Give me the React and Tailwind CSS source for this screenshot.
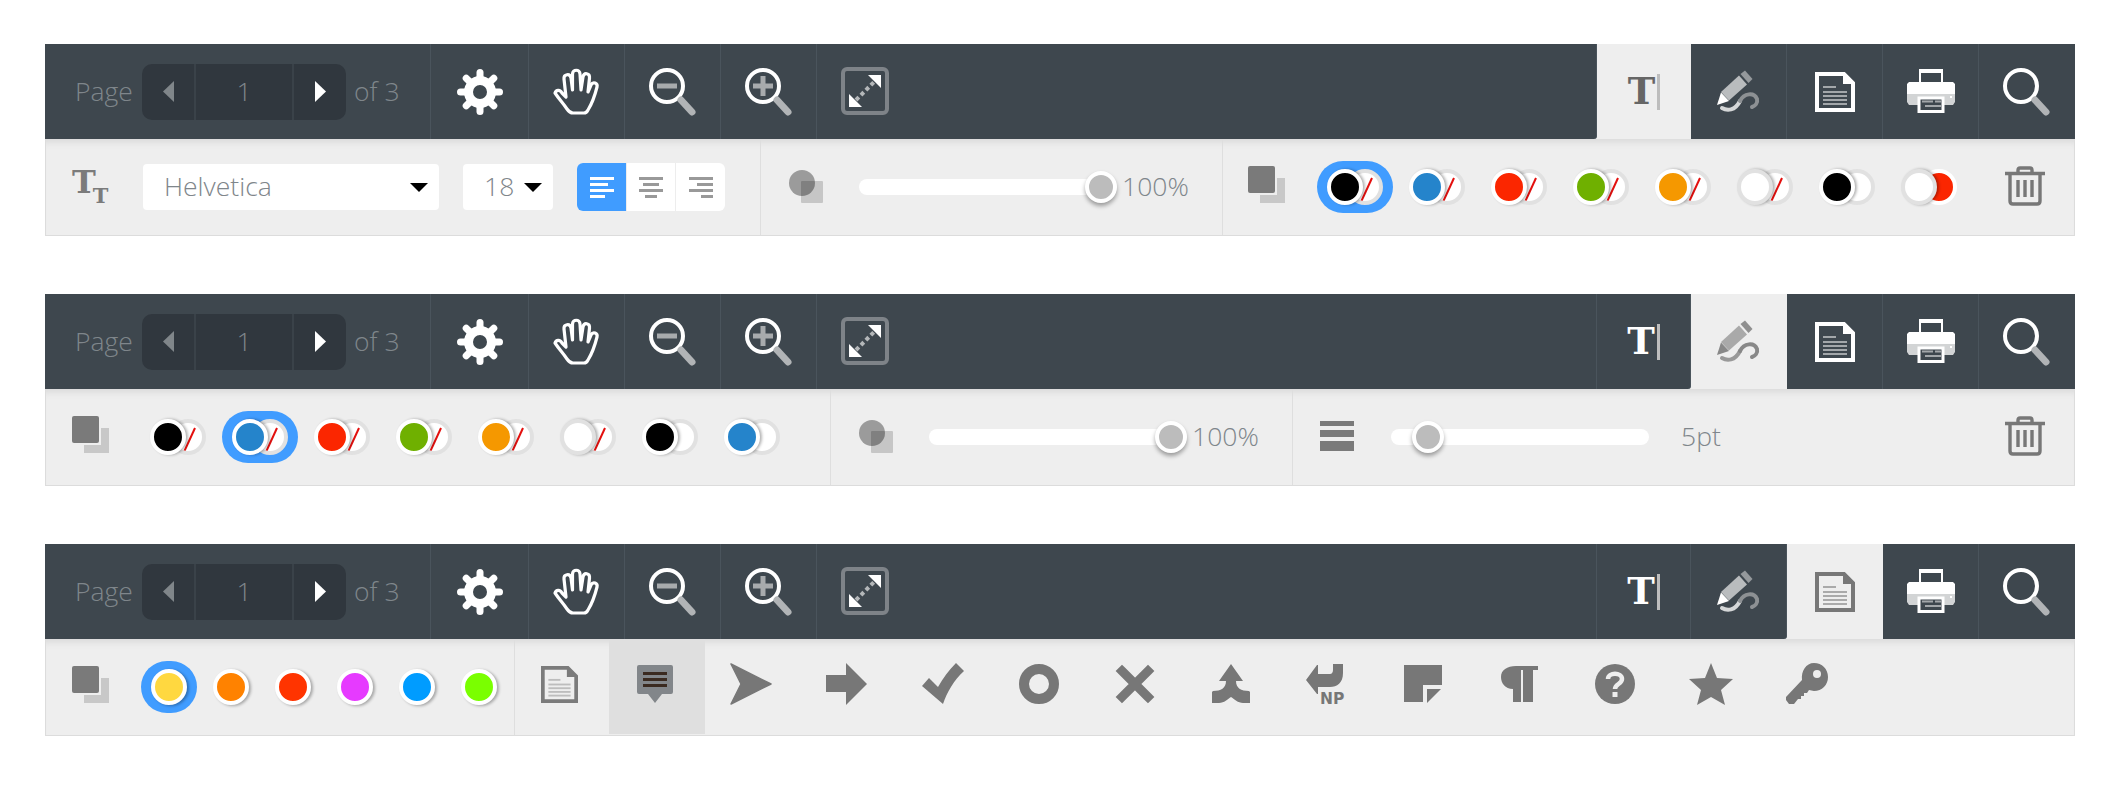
import React from "react";

const F = { fontFamily: '"Open Sans", sans-serif' };

function Gear() {
  const angles = [0, 45, 90, 135, 180, 225, 270, 315];
  return (
    <svg width="46" height="46" viewBox="0 0 46 46">
      <circle cx="23" cy="23" r="11.5" fill="none" stroke="#fff" strokeWidth="9" />
      {angles.map((a) => (
        <line key={a} x1="23" y1="10" x2="23" y2="3.5" stroke="#fff" strokeWidth="7" strokeLinecap="round" transform={`rotate(${a} 23 23)`} />
      ))}
    </svg>
  );
}

function HandIcon() {
  return (
    <svg width="48" height="48" viewBox="0 0 48 48" fill="none" stroke="#fff" strokeWidth="3.2" strokeLinejoin="round" strokeLinecap="round">
      <path d="M2 25 C3 22 7 21 9 25 L13 29 L11 11 C10.5 6 17 5 18 10 L19.5 22 L19.5 6 C19.5 1 27 1 27 6 L28 22 L30 9 C31 4 37 5 36.5 10 L35 24 L38 17 C40 13 45 15 44 19 C42 27 40 34 35 42 C34 44 33 45 31 45 H20 C17 45 16 44 14 41 C10 35 6 31 2 25 Z" />
    </svg>
  );
}

function Loupe({ sign }) {
  return (
    <svg width="50" height="50" viewBox="0 0 50 50">
      <circle cx="19" cy="19" r="16" fill="none" stroke="#fff" strokeWidth="4" />
      <line x1="33" y1="33" x2="44" y2="45" stroke="#b1b4b6" strokeWidth="7" strokeLinecap="round" />
      {sign && <rect x="9" y="16.5" width="20" height="5" fill="#a8abad" />}
      {sign === "plus" && <rect x="16.5" y="9" width="5" height="20" fill="#a8abad" />}
    </svg>
  );
}

function Expand() {
  return (
    <svg width="48" height="48" viewBox="0 0 48 48">
      <rect x="2" y="2" width="44" height="44" rx="4" fill="none" stroke="#7e8388" strokeWidth="4" />
      <polygon points="40,8 40,21 27,8" fill="#fff" />
      <polygon points="8,40 8,27 21,40" fill="#fff" />
      <line x1="15" y1="33" x2="33" y2="15" stroke="#b4b7b9" strokeWidth="4" strokeDasharray="4 3" />
    </svg>
  );
}

function TCursor({ active }) {
  return (
    <div className="flex items-center">
      <span className="text-[37px] leading-none font-bold" style={{ fontFamily: '"DejaVu Serif", serif', color: active ? "#666" : "#fff" }}>T</span>
      <span className="ml-[2px] w-[3px] h-[36px] bg-[#bdbdbd]" />
    </div>
  );
}

function Pencil({ active }) {
  return (
    <svg width="44" height="44" viewBox="0 0 44 44">
      <polygon points="4,22 22,5.5 30,14.5 12,30.5" fill={active ? "#a9a9a9" : "#b9bcbe"} />
      <polygon points="23.5,4 28,0.5 35.5,9 31.5,13" fill={active ? "#8f8f8f" : "#95999c"} />
      <polygon points="4,22.5 12,31 0,35" fill={active ? "#888" : "#fff"} />
      <path d="M5 38 C10 41 18 41 23 31" fill="none" stroke={active ? "#999" : "#d5d7d8"} strokeWidth="4" strokeLinecap="round" />
      <path d="M23 31 C27 23 37 22 40 29 C41 33 38 36 35 37" fill="none" stroke={active ? "#888" : "#8d9194"} strokeWidth="4" strokeLinecap="round" />
    </svg>
  );
}

function DocIcon({ color = "#fff", lines = "#a3a7aa", w = 40, h = 40 }) {
  return (
    <svg width={w} height={h} viewBox="0 0 40 40" preserveAspectRatio="none">
      <path d="M2 2 H29 L38 11 V38 H2 Z" fill="none" stroke={color} strokeWidth="4" />
      <path d="M28 1 L39 12 H28 Z" fill={color} />
      <rect x="8" y="14" width="13" height="2" fill={lines} />
      <rect x="8" y="19" width="24" height="2" fill={lines} />
      <rect x="8" y="23" width="24" height="2" fill={lines} />
      <rect x="8" y="27" width="24" height="2" fill={lines} />
      <rect x="8" y="31" width="24" height="2" fill={lines} />
    </svg>
  );
}

function Printer() {
  return (
    <svg width="48" height="44" viewBox="0 0 48 44">
      <path d="M12 0 H36 V20 H12 Z M14 4 V13 H34 V4 Z" fill="#fff" fillRule="evenodd" />
      <path d="M2 13 H46 L48 15 V25 H0 V15 Z" fill="#fff" />
      <path d="M0 25 H48 V33 L46 36 H2 L0 33 Z" fill="#d2d4d5" />
      <rect x="12" y="29" width="24" height="13.5" fill="#3e474e" stroke="#fff" strokeWidth="3" />
      <rect x="15" y="31.5" width="11" height="2" fill="#a3a7aa" />
      <rect x="28" y="31.5" width="6" height="2" fill="#a3a7aa" />
      <rect x="18" y="36" width="16" height="2" fill="#a3a7aa" />
      <rect x="43" y="27" width="2" height="2" fill="#fff" />
    </svg>
  );
}

function IconBtn({ children, active, square, noBorder, w = "w-[96px]" }) {
  return (
    <div className={`${w} shrink-0 flex items-center justify-center ${active ? "bg-[#eeeeee]" : "bg-[#3e474e]"} ${!active && !noBorder ? "border-r border-[#4a545c]" : ""} ${square ? "rounded-br-[3px]" : ""}`}>
      {children}
    </div>
  );
}

function Tri({ dir, color }) {
  const pts = dir === "left" ? "11,0 11,21 0,10.5" : "0,0 0,21 11,10.5";
  return <svg width="11" height="21" viewBox="0 0 11 21"><polygon points={pts} fill={color} /></svg>;
}

function Caret() {
  return <svg width="18" height="9" viewBox="0 0 18 9"><polygon points="0,0 18,0 9,9" fill="#000" /></svg>;
}

function TopBar({ tab }) {
  return (
    <div className="flex h-[95px] bg-[#eeeeee]" style={F}>
      <div className={`flex-1 flex bg-[#3e474e] border-r border-[#4a545c] ${tab === 0 ? "rounded-br-[3px]" : ""}`}>
        <div className="w-[386px] shrink-0 flex items-center pl-[30px] border-r border-[#4a545c] text-[26.5px] font-light text-[#7f868b]">
          <span className="w-[67px]">Page</span>
          <div className="flex h-[56px] w-[204px] rounded-[10px] bg-[#30373e] overflow-hidden">
            <div className="w-[52px] flex items-center justify-center"><Tri dir="left" color="#80868a" /></div>
            <div className="w-[100px] flex items-center justify-center border-x-2 border-[#3a4249]">1</div>
            <div className="w-[52px] flex items-center justify-center"><Tri dir="right" color="#fff" /></div>
          </div>
          <span className="ml-[8px]">of 3</span>
        </div>
        <IconBtn w="w-[98px]"><Gear /></IconBtn>
        <IconBtn><HandIcon /></IconBtn>
        <IconBtn><Loupe sign="minus" /></IconBtn>
        <IconBtn><Loupe sign="plus" /></IconBtn>
        <IconBtn noBorder><span className="mb-[2px]"><Expand /></span></IconBtn>
      </div>
      <IconBtn w="w-[94px]" active={tab === 0} square={tab === 1}><TCursor active={tab === 0} /></IconBtn>
      <IconBtn active={tab === 1} square={tab === 2}><Pencil active={tab === 1} /></IconBtn>
      <IconBtn active={tab === 2}>{tab === 2 ? <DocIcon color="#777" lines="#aaa" /> : <DocIcon />}</IconBtn>
      <IconBtn><span className="mb-[2px]"><Printer /></span></IconBtn>
      <IconBtn noBorder><Loupe /></IconBtn>
    </div>
  );
}

function SubBar({ children }) {
  return (
    <div className="flex h-[97px] bg-[#eeeeee] border-x border-b border-[#dcdcdc] shadow-[inset_0_9px_8px_-7px_rgba(0,0,0,0.11)]" style={F}>
      {children}
    </div>
  );
}

function Section({ w, children, className = "" }) {
  return <div className={`shrink-0 flex items-center border-r border-[#dedede] ${className}`} style={{ width: w }}>{children}</div>;
}

function TextSizeIcon() {
  return (
    <div className="flex items-start w-[40px] h-[40px] text-[#7b7b7b] font-bold leading-none" style={{ fontFamily: '"DejaVu Serif", serif' }}>
      <span className="text-[32px] -mt-[1px]">T</span>
      <span className="text-[21px] mt-[18px] -ml-[3px]">T</span>
    </div>
  );
}

function AlignIcon({ mode, color }) {
  const wide = mode === "left" ? [24, 18, 24, 15] : [24, 16, 24, 12];
  return (
    <svg width="24" height="21" viewBox="0 0 24 21">
      {wide.map((w, i) => {
        const x = mode === "center" ? (24 - w) / 2 : mode === "right" ? 24 - w : 0;
        return <rect key={i} x={x} y={i * 6} width={w} height="3" fill={color} />;
      })}
    </svg>
  );
}

function OpacityIcon() {
  return (
    <svg width="36" height="34" viewBox="0 0 36 34">
      <circle cx="13" cy="13" r="13" fill="#9b9b9b" />
      <rect x="12" y="11" width="22" height="22" rx="1" fill="#000" fillOpacity="0.17" />
    </svg>
  );
}

function BorderIcon() {
  return (
    <svg width="37" height="37" viewBox="0 0 37 37">
      <path d="M29 12 H37 V37 H12 V29 H29 Z" fill="#c8c8c8" />
      <rect x="0" y="0" width="27" height="27" rx="2" fill="#7a7a7a" />
    </svg>
  );
}

function Trash() {
  return (
    <svg width="40" height="40" viewBox="0 0 40 40" fill="none" stroke="#777" strokeWidth="3.4">
      <path d="M0 7.5 H40" />
      <path d="M13 7 V4 Q13 2 15 2 H25 Q27 2 27 4 V7" />
      <path d="M5 8 V35 Q5 38 8 38 H32 Q35 38 35 35 V8" />
      <path d="M13 14 V31 M20 14 V31 M27 14 V31" />
    </svg>
  );
}

function Slider({ left }) {
  return (
    <div className="relative w-[258px] h-[16px] bg-white rounded-full">
      <div className="absolute top-[-8px] w-[32px] h-[32px] rounded-full bg-[#bcbcbc] border-[4px] border-white shadow-[0_3px_4px_rgba(0,0,0,0.35)]" style={{ left }} />
    </div>
  );
}

function Swatch({ front, back, selected, mode = "pair" }) {
  const ring = front === "#fff" ? "border-[#e1e1e1]" : "border-white";
  return (
    <div className={`w-[76px] h-[52px] shrink-0 rounded-[26px] flex items-center justify-center ${selected ? "bg-[#409cff]" : ""}`}>
      <div className={`relative z-10 w-[36px] h-[36px] rounded-full border-[4px] ${ring} shadow-[2px_0_3px_rgba(0,0,0,0.3)]`} style={{ backgroundColor: front }} />
      <div className={`-ml-[16px] w-[36px] h-[36px] rounded-full border-[4px] ${back ? "border-white" : "border-[#e1e1e1]"} overflow-hidden`} style={{ backgroundColor: back || "#fff" }}>
        {mode === "slash" && (
          <svg width="28" height="28" viewBox="0 0 28 28"><line x1="21" y1="5" x2="10" y2="29" stroke="#e3100e" strokeWidth="2" /></svg>
        )}
      </div>
    </div>
  );
}

function Dot({ color, selected }) {
  return (
    <div className={`w-[56px] h-[52px] shrink-0 rounded-[26px] flex items-center justify-center ${selected ? "bg-[#409cff]" : ""}`}>
      <div className="w-[36px] h-[36px] rounded-full border-[4px] border-white shadow-[2px_1px_3px_rgba(0,0,0,0.3)]" style={{ backgroundColor: color }} />
    </div>
  );
}

const G = "#777";
const Arrow = () => <svg width="42" height="42" viewBox="0 0 42 42"><path d="M1 1 L41 21 L1 41 L11 21 Z" fill={G} stroke={G} strokeWidth="1.5" strokeLinejoin="round" /></svg>;
const RightArrow = () => <svg width="42" height="42" viewBox="0 0 42 42"><path d="M0 12 H20 V0 L41 21 L20 42 V29 H0 Z" fill={G} /></svg>;
const Check = () => <svg width="42" height="42" viewBox="0 0 42 42"><path d="M0 23 L7 15 L16 24 C21 15 27 7 34 0 L42 8 C32 17 25 29 21 41 Z" fill={G} /></svg>;
const Ring = () => <svg width="40" height="40" viewBox="0 0 40 40"><circle cx="20" cy="20" r="15" fill="none" stroke={G} strokeWidth="10" /></svg>;
const Cross = () => <svg width="40" height="40" viewBox="0 0 40 40"><path d="M7 7 L33 33 M33 7 L7 33" stroke={G} strokeWidth="9" strokeLinecap="square" /></svg>;
const Merge = () => <svg width="38" height="40" viewBox="0 0 38 40"><path d="M19 0 L31 17 H24 C24 24 29 27 37 27 L38 28 V39 H31 C26 39 22 35 19 33 C16 35 12 39 7 39 H0 V28 L1 27 C9 27 14 24 14 17 H7 Z" fill={G} /></svg>;
const NewPara = () => (
  <svg width="44" height="46" viewBox="0 0 44 46" className="block -mb-[4px]">
    <path d="M1 17 L12 2 H13 V11 H25 C27 11 28 9 28 7 V1 H38 V10 C38 20 32 24 25 24 H13 V31 H12 Z" fill={G} />
    <text x="15" y="41" fontFamily='"DejaVu Sans", sans-serif' fontWeight="700" fontSize="15.5" fill={G}>NP</text>
  </svg>
);
const Note = () => <svg width="38" height="38" viewBox="0 0 38 38"><path d="M0 0 H38 V20 H19 V37 H0 Z" fill={G} /><path d="M23 24 H37 L23 38 Z" fill={G} /></svg>;
const Para = () => <svg width="37" height="38" viewBox="0 0 37 38"><path d="M15 1 H37 V5 H32 V37 H22 V5 H20 V37 H12 V24 C4 24 0 18 0 12 C0 5 6 1 15 1 Z" fill={G} /></svg>;
const Help = () => (
  <svg width="40" height="40" viewBox="0 0 40 40">
    <circle cx="20" cy="20" r="20" fill={G} />
    <path d="M13 15 C13 8 27 8 27 15 C27 20 20 20 20 25" fill="none" stroke="#eeeeee" strokeWidth="4.5" />
    <rect x="17.5" y="28" width="5" height="5" fill="#eeeeee" />
  </svg>
);
const Star = () => <svg width="44" height="42" viewBox="0 0 44 42"><polygon points="22,0 28,15 44,16 32,27 36,42 22,34 8,42 12,27 0,16 16,15" fill={G} /></svg>;
const Key = () => (
  <svg width="42" height="42" viewBox="0 0 42 42">
    <path d="M28 0 C36 0 42 6 42 14 C42 22 36 28 28 28 L23 27 L21 30 H18 V33 H15 V36 H12 L8 41 H3 L0 37 V34 L16 17 C15 8 20 0 28 0 Z" fill={G} />
    <circle cx="31" cy="11" r="4" fill="#eeeeee" />
  </svg>
);

const SLASH = ["#000", "#2584cb", "#fb2600", "#6fb000", "#f59800", "#fff"];

function Cell({ children, active, w = "w-[96px]" }) {
  return <div className={`${w} shrink-0 flex items-center justify-center mb-[1px] ${active ? "bg-[#dfdfdf]" : ""}`}>{children}</div>;
}

export default function App() {
  return (
    <div className="min-h-[800px] bg-white pt-[44px] pl-[45px] w-[2075px] flex flex-col gap-[58px]">
      <div>
        <TopBar tab={0} />
        <SubBar>
          <Section w={715} className="pl-[26px]">
            <TextSizeIcon />
            <div className="ml-[31px] w-[296px] h-[46px] rounded-[4px] bg-white flex items-center justify-between pl-[21px] pr-[11px] text-[26.5px] font-light text-[#7f868b]">
              <span>Helvetica</span><Caret />
            </div>
            <div className="ml-[24px] w-[90px] h-[46px] rounded-[4px] bg-white flex items-center justify-between pl-[21px] pr-[11px] text-[26.5px] font-light text-[#7f868b]">
              <span>18</span><Caret />
            </div>
            <div className="ml-[24px] w-[148px] h-[48px] rounded-[6px] bg-white flex overflow-hidden">
              <div className="w-[49px] bg-[#409cff] flex items-center justify-center"><AlignIcon mode="left" color="#fff" /></div>
              <div className="w-[50px] border-x border-[#ededed] flex items-center justify-center"><AlignIcon mode="center" color="#999" /></div>
              <div className="w-[49px] flex items-center justify-center"><AlignIcon mode="right" color="#999" /></div>
            </div>
          </Section>
          <Section w={462} className="pl-[28px]">
            <OpacityIcon />
            <div className="ml-[34px]"><Slider left={226} /></div>
            <span className="ml-[5px] text-[26.5px] font-light text-[#7f868b]">100%</span>
          </Section>
          <div className="flex-1 flex items-center pl-[25px]">
            <span className="mb-[5px]"><BorderIcon /></span>
            <div className="ml-[32px] flex gap-[6px]">
              {SLASH.map((c, i) => <Swatch key={c} front={c} mode="slash" selected={i === 0} />)}
              <Swatch front="#000" />
              <Swatch front="#fff" back="#fb2600" />
            </div>
            <span className="ml-[38px] mb-[3px]"><Trash /></span>
          </div>
        </SubBar>
      </div>

      <div>
        <TopBar tab={1} />
        <SubBar>
          <Section w={785} className="pl-[26px]">
            <span className="mb-[5px]"><BorderIcon /></span>
            <div className="ml-[31px] flex gap-[6px]">
              {SLASH.map((c, i) => <Swatch key={c} front={c} mode="slash" selected={i === 1} />)}
              <Swatch front="#000" />
              <Swatch front="#2584cb" />
            </div>
          </Section>
          <Section w={462} className="pl-[28px]">
            <OpacityIcon />
            <div className="ml-[34px]"><Slider left={226} /></div>
            <span className="ml-[5px] text-[26.5px] font-light text-[#7f868b]">100%</span>
          </Section>
          <div className="flex-1 flex items-center pl-[27px]">
            <div className="w-[34px] h-[30px] flex flex-col justify-between mb-[3px]">
              <div className="h-[5px] bg-[#7a7a7a]" />
              <div className="h-[7px] bg-[#7a7a7a]" />
              <div className="h-[10px] bg-[#7a7a7a]" />
            </div>
            <div className="ml-[37px]"><Slider left={21} /></div>
            <span className="ml-[32px] w-[324px] text-[26.5px] font-light text-[#7f868b]">5pt</span>
            <span className="mb-[3px]"><Trash /></span>
          </div>
        </SubBar>
      </div>

      <div>
        <TopBar tab={2} />
        <SubBar>
          <Section w={469} className="pl-[26px]">
            <span className="mb-[5px]"><BorderIcon /></span>
            <div className="ml-[32px] flex gap-[6px]">
              <Dot color="#ffd840" selected />
              <Dot color="#ff8200" />
              <Dot color="#ff3400" />
              <Dot color="#e63aff" />
              <Dot color="#009cff" />
              <Dot color="#7aff00" />
            </div>
          </Section>
          <div className="flex flex-1">
            <Cell w="w-[94px]"><span className="mb-[5px] mr-[6px]"><DocIcon color="#7b7b7b" lines="#bdbdbd" w={37} h={37} /></span></Cell>
            <Cell active>
              <svg width="36" height="38" viewBox="0 0 36 38" className="mb-[6px] mr-[4px]">
                <path d="M2 0 H34 Q36 0 36 2 V27 Q36 29 34 29 H25 L18 38 L11 29 H2 Q0 29 0 27 V2 Q0 0 2 0 Z" fill="#82868a" />
                <rect x="6" y="7" width="24" height="3" fill="#3a2a20" />
                <rect x="6" y="13" width="24" height="3" fill="#3a2a20" />
                <rect x="6" y="19" width="24" height="3" fill="#3a2a20" />
              </svg>
            </Cell>
            {[<Arrow />, <RightArrow />, <Check />, <Ring />, <Cross />, <Merge />, <NewPara />, <Note />, <Para />, <Help />, <Star />, <Key />].map((ic, i) => (
              <Cell key={i}><span className="mb-[5px] mr-[4px] block">{ic}</span></Cell>
            ))}
          </div>
        </SubBar>
      </div>
    </div>
  );
}
